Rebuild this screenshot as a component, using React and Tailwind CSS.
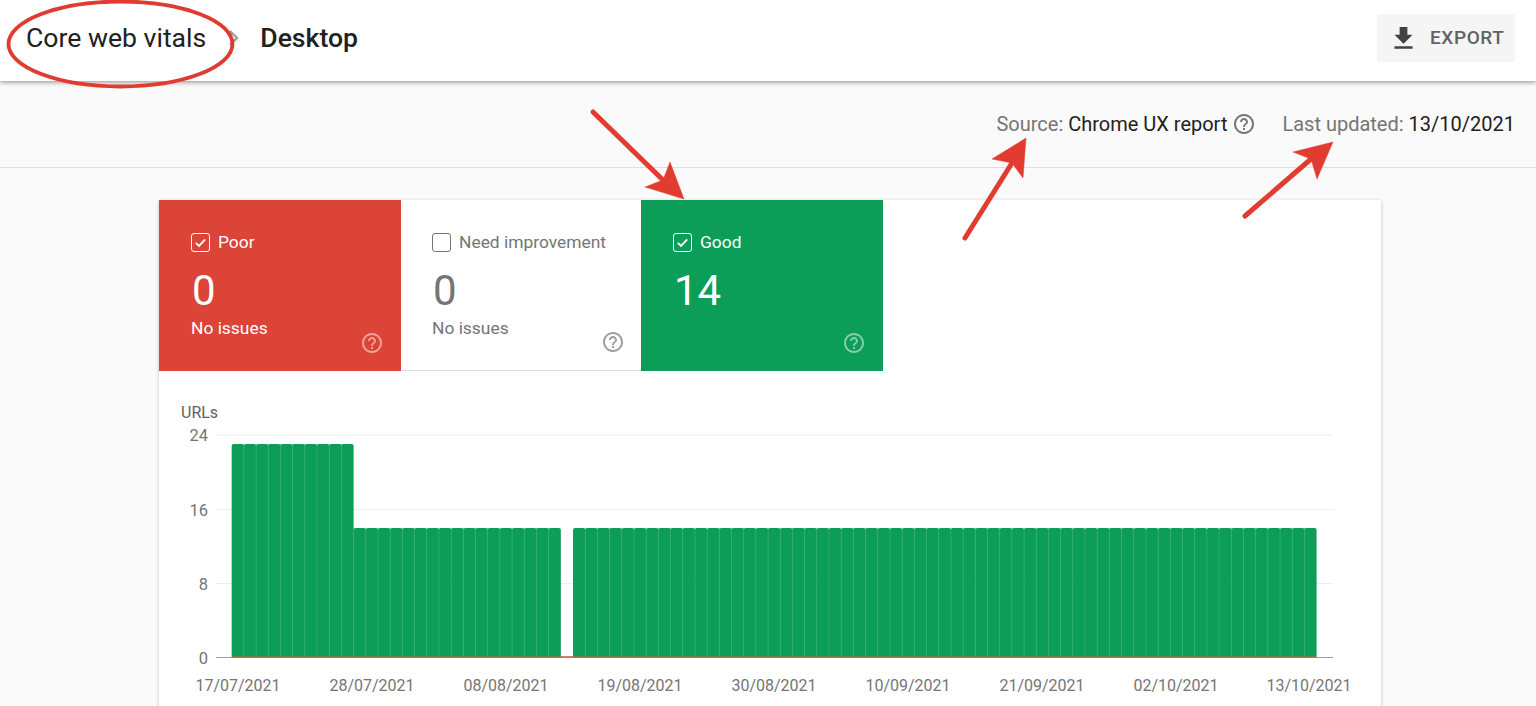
import React from 'react';

const BAR_START = 231.7;
const BAR_PITCH = 12.19;
const SLOTS = Array.from({ length: 89 }, (_, i) => i);
const X_LABELS = [
  ['17/07/2021', 238],
  ['28/07/2021', 372],
  ['08/08/2021', 506],
  ['19/08/2021', 640],
  ['30/08/2021', 774],
  ['10/09/2021', 908],
  ['21/09/2021', 1042],
  ['02/10/2021', 1176],
  ['13/10/2021', 1309],
];
const Y_TICKS = [
  ['24', 435],
  ['16', 509.5],
  ['8', 583.5],
];

const HelpIcon = ({ className }) => (
  <svg viewBox="0 0 24 24" width="24" height="24" fill="currentColor" className={className}>
    <path d="M11 18h2v-2h-2v2zm1-16C6.48 2 2 6.48 2 12s4.48 10 10 10 10-4.48 10-10S17.52 2 12 2zm0 18c-4.41 0-8-3.59-8-8s3.59-8 8-8 8 3.59 8 8-3.59 8-8 8zm0-14c-2.21 0-4 1.79-4 4h2c0-1.1.9-2 2-2s2 .9 2 2c0 2-3 1.75-3 5h2c0-2.25 3-2.5 3-5 0-2.21-1.79-4-4-4z" />
  </svg>
);

const Checkbox = ({ checked }) => (
  <span className="flex h-[19px] w-[19px] shrink-0 items-center justify-center rounded-[3px] border-[1.5px] border-current">
    {checked && (
      <svg viewBox="0 0 16 16" width="15" height="15" fill="none" stroke="currentColor" strokeWidth="1.9">
        <path d="M3 8.5l3.4 3.2L13 4.6" />
      </svg>
    )}
  </span>
);

const Tile = ({ label, value, note, checked, className, helpClassName }) => (
  <div className={`relative h-[171px] pt-[33px] ${className}`}>
    <div className="flex h-[19px] items-center gap-[8px] text-[17.4px] leading-[19px]">
      <Checkbox checked={checked} />
      <span>{label}</span>
    </div>
    <div className="mt-[15px] h-[47px] pl-[1px] text-[42px] leading-[47px]">{value}</div>
    {note && <div className="mt-[4px] text-[17.4px] leading-[20px]">{note}</div>}
    <HelpIcon className={`absolute bottom-[16px] ${helpClassName}`} />
  </div>
);

const Chart = () => (
  <svg viewBox="159 371 1222 335" className="block h-[335px] w-full">
    <text x="181" y="418" fontSize="16" fill="#616161">URLs</text>

    {Y_TICKS.map(([label, y]) => (
      <g key={label}>
        <line x1="216" x2="1333" y1={y} y2={y} stroke="#eeeeee" strokeWidth="1" />
        <text x="208" y={y + 6} fontSize="16.5" fill="#757575" textAnchor="end">{label}</text>
      </g>
    ))}
    <text x="208" y="663.5" fontSize="16.5" fill="#757575" textAnchor="end">0</text>

    {SLOTS.map((i) => {
      if (i === 27) return null;
      const x = BAR_START + i * BAR_PITCH;
      const top = i < 10 ? 444 : 528;
      return (
        <path
          key={i}
          d={`M${x} 657 V${top + 2} Q${x} ${top} ${x + 2} ${top} H${x + BAR_PITCH - 2} Q${x + BAR_PITCH} ${top} ${x + BAR_PITCH} ${top + 2} V657 Z`}
          fill="#0c9d58"
        />
      );
    })}
    {/* light seams between the bars */}
    {SLOTS.map((i) => {
      if (i === 0 || i === 27 || i === 28) return null;
      const x = BAR_START + i * BAR_PITCH;
      const top = i < 10 ? 444 : 528;
      return <line key={i} x1={x} x2={x} y1={top} y2="656" stroke="#2fa96f" strokeWidth="0.8" />;
    })}

    <line x1="216" x2="1333" y1="657.5" y2="657.5" stroke="#9e9e9e" strokeWidth="1.2" />
    <line x1="232" x2="1316" y1="657" y2="657" stroke="#a8684a" strokeWidth="1.6" />
    <line x1="561" x2="573" y1="657" y2="657" stroke="#e57368" strokeWidth="1.4" />

    {X_LABELS.map(([label, x]) => (
      <text key={label} x={x} y="690.5" fontSize="16" fill="#757575" textAnchor="middle">{label}</text>
    ))}
  </svg>
);

const Annotations = () => (
  <svg viewBox="0 0 1536 706" className="pointer-events-none absolute left-0 top-0 z-20 h-[706px] w-[1536px]">
    <ellipse cx="120.5" cy="44" rx="112" ry="42.5" fill="none" stroke="#df3b30" strokeWidth="3.8" />
    <g fill="#e13c2f" stroke="#e13c2f" strokeLinejoin="round">
      <line x1="593" y1="112" x2="664" y2="181" strokeWidth="5" strokeLinecap="round" />
      <path d="M684 199L670 162L663 180L645 187Z" strokeWidth="0.5" />
      <line x1="965" y1="238" x2="1012" y2="163" strokeWidth="5" strokeLinecap="round" />
      <path d="M1026 138L992 159L1012 163L1023 178Z" strokeWidth="0.5" />
      <line x1="1245" y1="216" x2="1311" y2="159" strokeWidth="5" strokeLinecap="round" />
      <path d="M1333 142L1293 152L1311 159L1317 179Z" strokeWidth="0.5" />
    </g>
  </svg>
);

export default function App() {
  return (
    <div className="relative h-[706px] w-[1536px] overflow-hidden bg-[#fafafa] font-['Roboto',sans-serif]">
      <header className="relative z-10 flex h-[81px] items-center justify-between bg-white pb-[5px] pl-[26px] pr-[21px] shadow-[0_1px_5px_rgba(0,0,0,0.45)]">
        <div className="flex items-center text-[26.6px] leading-[30px] text-[#212121]">
          <span>Core web vitals</span>
          <svg viewBox="0 0 12 18" width="12" height="18" fill="none" stroke="#9e9e9e" strokeWidth="2.4" className="ml-[22px] mr-[20px]">
            <path d="M2 2l7 7-7 7" />
          </svg>
          <span className="font-medium">Desktop</span>
        </div>
        <button type="button" className="flex h-[48px] w-[138px] items-center gap-[11px] rounded-[3px] bg-[#f5f5f5] pl-[11px] text-[19px] font-medium tracking-[0.6px] text-[#5f6368]">
          <svg viewBox="0 0 24 24" width="31" height="31" fill="#424242">
            <path d="M19 9h-4V3H9v6H5l7 7 7-7zM5 18v2h14v-2H5z" />
          </svg>
          <span>EXPORT</span>
        </button>
      </header>

      <div className="flex h-[87px] items-center justify-end border-b border-[#dfdfdf] pr-[21px] text-[20px] leading-[22px] text-[#757575]">
        <span>Source: <span className="text-[#212121]">Chrome UX report</span></span>
        <HelpIcon className="ml-[5px] text-[#757575]" />
        <span className="ml-[26px]">Last updated: <span className="text-[#212121]">13/10/2021</span></span>
      </div>

      <main className="ml-[159px] mt-[32px] h-[540px] w-[1222px] bg-white shadow-[0_1px_4px_rgba(0,0,0,0.22)]">
        <div className="flex">
          <Tile label="Poor" value="0" note="No issues" checked className="w-[242px] bg-[#db4437] pl-[32px] text-white" helpClassName="right-[17px] text-white/50" />
          <Tile label="Need improvement" value="0" note="No issues" className="w-[240px] border-b border-[#e0e0e0] bg-white pl-[31px] text-[#757575]" helpClassName="right-[16px] text-[#9e9e9e]" />
          <Tile label="Good" value="14" checked className="w-[242px] bg-[#0c9d58] pl-[32px] text-white" helpClassName="right-[17px] text-white/50" />
        </div>
        <Chart />
      </main>

      <Annotations />
    </div>
  );
}
